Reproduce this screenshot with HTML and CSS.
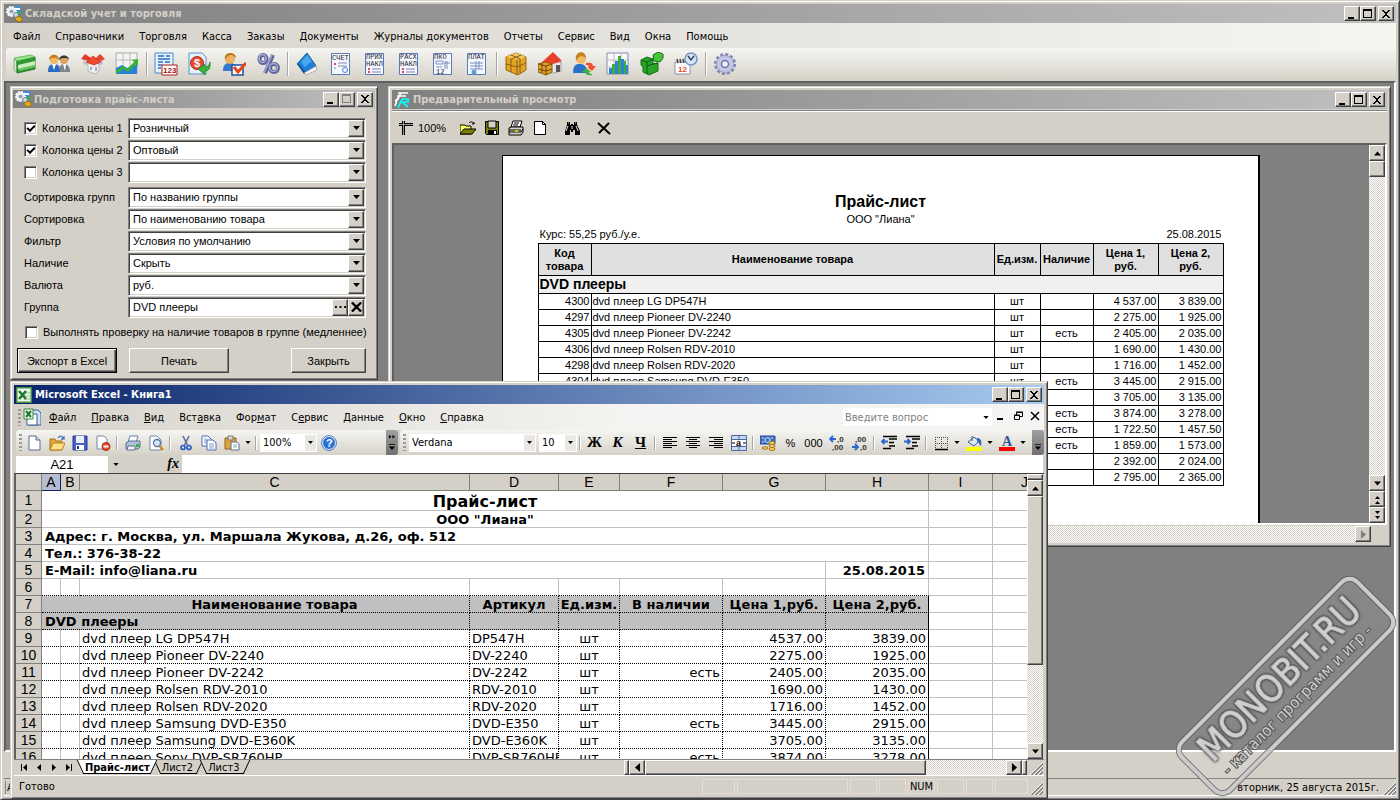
FILE: index.html
```html
<!DOCTYPE html>
<html lang="ru">

<head>
    <meta charset="UTF-8">
    <meta name="viewport" content="width=device-width, initial-scale=1.0">
    <title>Складской учет и торговля</title>
    <link rel="stylesheet" href="styles.css">
</head>

<body>
    <!-- Shared glyphs -->
    <svg class="sprite" aria-hidden="true">
        <symbol id="i-min" viewBox="0 0 12 10"><path d="M2 8h6v2H2z" /></symbol>
        <symbol id="i-max" viewBox="0 0 12 10"><path d="M1 0h9v9H1zM2 2v6h7V2z" fill-rule="evenodd" /></symbol>
        <symbol id="i-close" viewBox="0 0 12 10"><path d="M2 1h2v1h1v1h2V2h1V1h2v1H9v1H8v1H7v2h1v1h1v1h1v1H8V8H7V7H5v1H4v1H2V8h1V7h1V6h1V4H4V3H3V2H2z" /></symbol>
        <symbol id="i-down" viewBox="0 0 7 4"><path d="M0 0h7L3.500 4z" /></symbol>
        <symbol id="i-up" viewBox="0 0 7 4"><path d="M0 4h7L3.500 0z" /></symbol>
        <symbol id="i-left" viewBox="0 0 4 7"><path d="M4 0v7L0 3.500z" /></symbol>
        <symbol id="i-right" viewBox="0 0 4 7"><path d="M0 0v7l4-3.500z" /></symbol>
        <symbol id="i-app" viewBox="0 0 16 16">
            <path d="M9 0h6v9H9z" fill="#3c8fe0" /><path d="M10 2h4v2h-4z" fill="#fff" /><path d="M12 5h3v4h-3z" fill="#2fae4e" />
            <circle cx="5.500" cy="5.500" r="4.500" fill="#e8ecf2" stroke="#fff" stroke-width="2" stroke-dasharray="2 1" />
            <circle cx="5.500" cy="5.500" r="1.800" fill="#8e99ab" />
            <circle cx="10" cy="9" r="2.500" fill="#cdd5e2" stroke="#76839a" />
            <path d="M9 12l4-2 3 2v3l-3 1-4-2z" fill="#e5a91b" stroke="#7d5505" stroke-width=".7" />
        </symbol>
        <symbol id="i-grip" viewBox="0 0 13 13"><path d="M1 13L13 1M5 13l8-8M9 13l4-4" stroke="#808080" stroke-width="2" /><path d="M0 13L13 0M4 13l9-9M8 13l5-5" stroke="#fff" /></symbol>
        <symbol id="i-sheet" viewBox="0 0 24 24"><path d="M2.500 1.500h18v21h-18z" fill="#f5f8ff" stroke="#5b7ab5" /></symbol>
    </svg>

    <div class="app frame">
        <header class="titlebar">
            <svg class="title-icon"><use href="#i-app" /></svg>
            <h1>Складской учет и торговля</h1>
            <button class="win-btn" aria-label="Свернуть"><svg><use href="#i-min" /></svg></button>
            <button class="win-btn" aria-label="Развернуть"><svg><use href="#i-max" /></svg></button>
            <button class="win-btn win-close" aria-label="Закрыть"><svg><use href="#i-close" /></svg></button>
        </header>

        <nav class="menubar">
            <button>Файл</button>
            <button>Справочники</button>
            <button>Торговля</button>
            <button>Касса</button>
            <button>Заказы</button>
            <button>Документы</button>
            <button>Журналы документов</button>
            <button>Отчеты</button>
            <button>Сервис</button>
            <button>Вид</button>
            <button>Окна</button>
            <button>Помощь</button>
        </nav>

        <div class="toolbar">
            <button aria-label="Товары"><svg viewBox="0 0 24 24"><path d="M1 7l3 2v11l-3-2z" fill="#d5e8d0" stroke="#5f9a5c" stroke-width=".7" /><path d="M4 9l18-4v12L4 21z" fill="#2f9a35" stroke="#247a28" /><path d="M1 6l17-3 4 2L4 9z" fill="#9be68a" stroke="#4ca945" stroke-width=".7" /><path d="M5 13l17-4v4L5 17z" fill="#c9efc0" /><path d="M6 17l16-4v2L6 19z" fill="#6fca62" /></svg></button>
            <button aria-label="Клиенты"><svg viewBox="0 0 24 24"><path d="M12 20c0-6 2-8 5-8s6 2 6 8z" fill="#7d8490" /><path d="M16 12h3l-1 7z" fill="#fff" /><circle cx="17" cy="8" r="4" fill="#dca25e" /><path d="M12 8c0-6 10-6 10 0l-2-2h-5z" fill="#333" /><path d="M1 20c0-6 2-8 6-8s6 2 6 8z" fill="#2b6cc0" /><path d="M5 12h4l-2 6z" fill="#fff" /><circle cx="7" cy="8" r="4" fill="#f3b867" /><path d="M2 8c0-7 10-7 10 0L9 6H5z" fill="#c48222" /></svg></button>
            <button aria-label="Склады"><svg viewBox="0 0 24 24"><path d="M3 7h5v5H3zM16 7h5v5h-5z" fill="#d5d7de" stroke="#999" stroke-width=".6" /><path d="M0 7l4-5 6 4-1 3z" fill="#e23a25" /><path d="M14 7l5-5 5 5-4 2z" fill="#e8432c" /><path d="M7 11h11v8l-4 3-7-3z" fill="#edeef2" stroke="#9a9ca5" stroke-width=".6" /><path d="M5 10l7-6 8 6-7 3z" fill="#ef4a31" stroke="#b3200e" stroke-width=".6" /><path d="M9 15h2v3H9zM14 15h2v4h-2z" fill="#a7acb7" /></svg></button>
            <button aria-label="Графики"><svg viewBox="0 0 24 24"><path d="M1 1h21v20H1z" fill="#f4f4f4" stroke="#aaa" /><path d="M8 1v20M15 1v20M1 8h21" stroke="#bbb" /><path d="M1 22v-6l6-3 5 3 10-4v10z" fill="#2980d9" /><path d="M1 19l7-5 4 3 7-7-2-2 6-1v7l-2-2-8 8-4-3-8 5z" fill="#35b52c" /></svg></button>
            <span class="sep"></span>
            <button aria-label="Чек"><svg viewBox="0 0 24 24"><path d="M1 1h18v20H1z" fill="#e4f0fd" stroke="#4688c9" /><path d="M4 4h6M12 4h4M4 7h12M4 10h5M11 10h5M4 13h4M4 16h3" stroke="#2a6fb7" stroke-width="1.500" /><path d="M8 13h15v10H8z" fill="#fff" stroke="#b21c1c" /><text x="9" y="21" class="g-123">123</text></svg></button>
            <button aria-label="Оплата"><svg viewBox="0 0 24 24"><path d="M1 1h13l4 4v17H1z" fill="#e7f1fd" stroke="#5b92cf" /><circle cx="9" cy="11" r="6.500" fill="#e8492c" stroke="#b52a12" /><text x="6" y="15" class="g-dollar">$</text><path d="M22 10c1 7-2 9-5 9v4l-7-6 7-5v3c2 0 4-1 5-5z" fill="#3db03a" stroke="#1e7c1d" stroke-width=".7" /></svg></button>
            <button aria-label="Менеджеры"><svg viewBox="0 0 24 24"><path d="M1 19c0-7 3-8 7-8s7 2 7 8z" fill="#3b78cf" /><circle cx="8" cy="7" r="5" fill="#eeb163" /><path d="M3 8C1-1 14-1 14 6l-4-3c-3 0-5 1-7 5z" fill="#b97a1e" /><path d="M10 13h11v10H10z" fill="#fff" stroke="#2250a0" stroke-width="1.500" /><path d="M12 15l4 5 8-9" fill="none" stroke="#e84415" stroke-width="3" /></svg></button>
            <button aria-label="Скидки"><svg viewBox="0 0 24 24"><g fill="none" stroke="#5e6399" stroke-width="4"><ellipse cx="7" cy="7" rx="3.500" ry="4" /><ellipse cx="18" cy="16" rx="4" ry="4" /><path d="M17 3L9 21" /></g><g fill="none" stroke="#a9adda" stroke-width="1.500"><ellipse cx="6.500" cy="6.500" rx="3.500" ry="4" /><ellipse cx="17.500" cy="15.500" rx="4" ry="4" /><path d="M16 3L8 21" /></g></svg></button>
            <span class="sep"></span>
            <button aria-label="Справочник"><svg viewBox="0 0 24 24"><path d="M2 12L12 1l9 13-10 7z" fill="#1c80d8" stroke="#0f5a9f" /><path d="M2 12l7 10 2-1-6-8z" fill="#0d5396" /><path d="M9 21l12-7 1 4-11 5z" fill="#f5f5f5" stroke="#888" stroke-width=".6" /><path d="M6 10l6-7 5 6-7 6z" fill="#4aa7f0" /></svg></button>
            <button aria-label="Счет"><svg viewBox="0 0 24 24"><use href="#i-sheet" /><text x="3" y="8" class="g-doc">СЧЕТ</text><path d="M6 11v2" stroke="#c13" stroke-width="1.500" /><path d="M6 15v2M9 14h9M9 11h9" stroke="#7c86b4" /><circle cx="16" cy="18" r="2.500" fill="none" stroke="#3f7fd0" /></svg></button>
            <button aria-label="Приходная накладная"><svg viewBox="0 0 24 24"><use href="#i-sheet" /><text x="3" y="7" class="g-doc">ПРИХ</text><text x="3" y="14" class="g-doc">НАКЛ</text><path d="M6 16v2M6 19v2" stroke="#c13" stroke-width="1.500" /><path d="M9 17h9M9 20h9" stroke="#7c86b4" /></svg></button>
            <button aria-label="Расходная накладная"><svg viewBox="0 0 24 24"><use href="#i-sheet" /><text x="3" y="7" class="g-doc">РАСХ</text><text x="3" y="14" class="g-doc">НАКЛ</text><path d="M6 16v2M6 19v2" stroke="#c13" stroke-width="1.500" /><path d="M9 17h9M9 20h9" stroke="#7c86b4" /></svg></button>
            <button aria-label="Кассовый ордер"><svg viewBox="0 0 24 24"><use href="#i-sheet" /><text x="3" y="7" class="g-doc">ПКО</text><path d="M5 9h7v3H5zM14 9v8M14 11h5M16 9v8M5 15h6" fill="none" stroke="#7c8fc0" /><text x="5" y="22" class="g-doc">12</text></svg></button>
            <button aria-label="Платежное поручение"><svg viewBox="0 0 24 24"><use href="#i-sheet" /><text x="3" y="7" class="g-doc">ПЛАТ</text><path d="M5 11h13M11 9v8M5 14h13M5 17h13M14 9v8" stroke="#7c8fc0" /><circle cx="9" cy="20" r="2.500" fill="#5aa0e0" /></svg></button>
            <span class="sep"></span>
            <button aria-label="Товар"><svg viewBox="0 0 24 24"><path d="M2 5l10-4 10 4v13l-8 5-12-5z" fill="#e2a32a" stroke="#99660d" /><path d="M2 5l11 3 9-3-10-4z" fill="#f3c55c" /><path d="M13 8v15M2 12l11 3 9-4M7 3l9 4v14M7 6v14M8 7l9-4" fill="none" stroke="#8a5d0c" /></svg></button>
            <button aria-label="Склад"><svg viewBox="0 0 24 24"><path d="M8 10h15v9l-8 2H8z" fill="#e4e6ec" stroke="#888" stroke-width=".7" /><path d="M4 10L15 0l9 9-9 3z" fill="#e8412b" /><path d="M18 13h4v7h-4z" fill="#555" /><path d="M0 12l7-2 7 2v8l-6 3-8-3z" fill="#e2a32a" stroke="#8b5c09" /><path d="M0 12l8 2 6-2M8 14v9M0 17l8 2 6-2M4 11v10" fill="none" stroke="#6d4706" /></svg></button>
            <button aria-label="Возврат"><svg viewBox="0 0 24 24"><path d="M1 21c0-8 3-9 7-9s7 2 7 9z" fill="#2b71c8" /><circle cx="9" cy="7" r="5" fill="#f3b867" /><path d="M4 9C2-2 14-2 14 6l-4-2c-2 0-4 1-6 5z" fill="#c48222" /><path d="M14 11c4-1 7 0 7 3h3l-4 5-5-4h2c0-1-1-2-3-2z" fill="#f0502e" /><path d="M20 23c-4 1-7-1-7-3h-3l4-4 5 4h-2c0 1 1 2 3 2z" fill="#3db03a" /></svg></button>
            <button aria-label="Отчет"><svg viewBox="0 0 24 24"><path d="M1 1h21v21H1z" fill="#fafafa" stroke="#8888b0" /><path d="M1 8h21M1 15h21M8 1v21M15 1v21" stroke="#bbb" /><path d="M3 16h3v6H3zM9 9h3v13H9zM15 7h3v15h-3zM20 13h2v9h-2z" fill="#2f7fe0" /><path d="M6 12h3v10H6zM12 4h3v18h-3zM18 9h2v13h-2z" fill="#3cae33" /></svg></button>
            <button aria-label="Модули"><svg viewBox="0 0 24 24"><path d="M1 8l6-3 6 2v5l5-1v8l-9 4-6-3v-5l-2-2z" fill="#27a327" stroke="#137013" /><path d="M1 8l6 2 6-3M7 10v12M7 14l6-2 5-1" fill="none" stroke="#0c5c0c" /><path d="M13 3l5-3 5 2v4l-3 4-6-1z" fill="#45c43c" stroke="#137013" /></svg></button>
            <button aria-label="Планировщик"><svg viewBox="0 0 24 24"><path d="M1 10h15v12H1z" fill="#fff" stroke="#8b93ab" /><path d="M3 7l1 4M6 7l1 4M9 7l1 4" stroke="#444" stroke-width="1.500" /><text x="4" y="20" class="g-cal">12</text><circle cx="17" cy="7" r="6" fill="#cfe6fa" stroke="#7a93bb" stroke-width="1.500" /><path d="M14 4l3 4 3-4" fill="none" stroke="#335" stroke-width="1.300" /></svg></button>
            <span class="sep"></span>
            <button aria-label="Настройки"><svg viewBox="0 0 24 24"><circle cx="12" cy="12" r="9.500" fill="none" stroke="#8186ad" stroke-width="3" stroke-dasharray="3 1.970" /><circle cx="12" cy="12" r="8.500" fill="#c5c8e4" stroke="#9a9ec6" /><circle cx="12" cy="12" r="3.500" fill="#eeeef8" stroke="#7075a5" stroke-width="1.500" /></svg></button>
        </div>

        <main class="mdi">
            <!-- Price list dialog -->
            <section class="dialog frame">
                <div class="titlebar">
                    <svg class="title-icon"><use href="#i-app" /></svg>
                    <h2>Подготовка прайс-листа</h2>
                    <button class="win-btn" aria-label="Свернуть"><svg><use href="#i-min" /></svg></button>
                    <button class="win-btn win-off" aria-label="Развернуть" disabled><svg><use href="#i-max" /></svg></button>
                    <button class="win-btn win-close" aria-label="Закрыть"><svg><use href="#i-close" /></svg></button>
                </div>
                <form class="price-form">
                    <div class="field">
                        <label class="check"><input type="checkbox" checked>Колонка цены 1</label>
                        <div class="combo"><select aria-label="Цена 1"><option>Розничный</option></select><span class="drop"><svg><use href="#i-down" /></svg></span></div>
                    </div>
                    <div class="field">
                        <label class="check"><input type="checkbox" checked>Колонка цены 2</label>
                        <div class="combo"><select aria-label="Цена 2"><option>Оптовый</option></select><span class="drop"><svg><use href="#i-down" /></svg></span></div>
                    </div>
                    <div class="field field-last">
                        <label class="check"><input type="checkbox">Колонка цены 3</label>
                        <div class="combo"><select aria-label="Цена 3"><option></option></select><span class="drop"><svg><use href="#i-down" /></svg></span></div>
                    </div>
                    <div class="field">
                        <label for="sortGroups">Сортировка групп</label>
                        <div class="combo"><select id="sortGroups"><option>По названию группы</option></select><span class="drop"><svg><use href="#i-down" /></svg></span></div>
                    </div>
                    <div class="field">
                        <label for="sortItems">Сортировка</label>
                        <div class="combo"><select id="sortItems"><option>По наименованию товара</option></select><span class="drop"><svg><use href="#i-down" /></svg></span></div>
                    </div>
                    <div class="field">
                        <label for="filter">Фильтр</label>
                        <div class="combo"><select id="filter"><option>Условия по умолчанию</option></select><span class="drop"><svg><use href="#i-down" /></svg></span></div>
                    </div>
                    <div class="field">
                        <label for="stock">Наличие</label>
                        <div class="combo"><select id="stock"><option>Скрыть</option></select><span class="drop"><svg><use href="#i-down" /></svg></span></div>
                    </div>
                    <div class="field">
                        <label for="currency">Валюта</label>
                        <div class="combo"><select id="currency"><option>руб.</option></select><span class="drop"><svg><use href="#i-down" /></svg></span></div>
                    </div>
                    <div class="field">
                        <label for="group">Группа</label>
                        <div class="combo">
                            <input type="text" id="group" value="DVD плееры">
                            <button type="button" class="drop" aria-label="Выбрать"><svg viewBox="0 0 12 10"><path d="M0 4h2v2H0zM5 4h2v2H5zM10 4h2v2h-2z" /></svg></button>
                            <button type="button" class="drop" aria-label="Очистить"><svg viewBox="0 0 12 10"><path d="M1 0l10 10M11 0L1 10" stroke="#000" stroke-width="2.500" /></svg></button>
                        </div>
                    </div>
                    <label class="check check-wide"><input type="checkbox">Выполнять проверку на наличие товаров в группе (медленнее)</label>
                    <div class="form-buttons">
                        <button type="button" class="btn btn-default">Экспорт в Excel</button>
                        <button type="button" class="btn">Печать</button>
                        <button type="button" class="btn btn-small">Закрыть</button>
                    </div>
                </form>
            </section>

            <!-- Print preview -->
            <section class="preview frame">
                <div class="titlebar">
                    <svg class="title-icon" viewBox="0 0 16 16"><path d="M4 1h10M3 4h9M7 1L3 8M1 9l4-3M3 8l-2 6" stroke="#fff" stroke-width="1.700" fill="none" /><path d="M8 7h6v3H8l6 5M8 7l-4 9M8 10h5" stroke="#0ff" stroke-width="1.700" fill="none" /></svg>
                    <h2>Предварительный просмотр</h2>
                    <button class="win-btn" aria-label="Свернуть"><svg><use href="#i-min" /></svg></button>
                    <button class="win-btn" aria-label="Развернуть"><svg><use href="#i-max" /></svg></button>
                    <button class="win-btn win-close" aria-label="Закрыть"><svg><use href="#i-close" /></svg></button>
                </div>
                <div class="preview-tools">
                    <button class="tool-zoom"><svg viewBox="0 0 16 16"><path d="M1 4.500h14M5.500 1v14" stroke="#000" stroke-width="3" /><path d="M1 4.500h14M5.500 1v14" stroke="#999" /></svg>100%</button>
                    <button aria-label="Открыть"><svg viewBox="0 0 16 16"><path d="M0 5h5l1 1h5v8H0z" fill="#ff6" stroke="#000" /><path d="M0 14l4-5h12l-4 5z" fill="#808000" stroke="#000" /><path d="M9 3c2-2 4-1 5 1m0-2v2h-2" fill="none" stroke="#000" /></svg></button>
                    <button aria-label="Сохранить"><svg viewBox="0 0 16 16"><path d="M1.500 1.500h13v13h-12l-1-1z" fill="#808000" stroke="#000" /><path d="M4 1h8v7H4z" fill="#d4d0c8" stroke="#000" /><path d="M4 10h9v5H4z" /><path d="M10 11h2v3h-2z" fill="#fff" /></svg></button>
                    <button aria-label="Печать"><svg viewBox="0 0 16 16"><path d="M5 1h9l-2 6H3z" fill="#fff" stroke="#000" /><path d="M6 3h5M5 5h5" stroke="#000" /><path d="M1 8l2-1h12v5l-2 3H1z" fill="#d4d0c8" stroke="#000" /><path d="M1 10h12M1 12h12l2-3" stroke="#000" fill="none" /><path d="M7 11h3" stroke="#cc0" stroke-width="2" /></svg></button>
                    <button aria-label="Страница"><svg viewBox="0 0 16 16"><path d="M2.500 1.500h8l3 3v10h-11z" fill="#fff" stroke="#000" /><path d="M10.500 1v3.500H14" fill="none" stroke="#000" /></svg></button>
                    <button class="tool-find" aria-label="Найти"><svg viewBox="0 0 16 16"><path d="M3 2h3v3h1V4h2v1h1V2h3v3l3 6v4h-5v-5H9v2H7v-2H6v5H1v-4l2-6z" /><path d="M4 6l-2 5M12 6l2 5M4 3h1M11 3h1M8 6v3" stroke="#fff" stroke-width=".9" /></svg></button>
                    <button class="tool-find" aria-label="Закрыть просмотр"><svg viewBox="0 0 16 16"><path d="M2 3l12 11M13 3L3 13" stroke="#000" stroke-width="2" /></svg></button>
                </div>
                <div class="preview-view">
                    <div class="canvas">
                        <article class="paper">
                            <h3>Прайс-лист</h3>
                            <p class="org">ООО "Лиана"</p>
                            <p class="rate"><span>Курс: 55,25 руб./у.е.</span><span>25.08.2015</span></p>
                            <table class="price-table">
                                <colgroup><col class="w-code"><col><col class="w-unit"><col class="w-code"><col class="w-price"><col class="w-price"></colgroup>
                                <thead>
                                    <tr><th>Код товара</th><th>Наименование товара</th><th>Ед.изм.</th><th>Наличие</th><th>Цена 1,<br>руб.</th><th>Цена 2,<br>руб.</th></tr>
                                </thead>
                                <tbody>
                                    <tr class="group"><td colspan="6">DVD плееры</td></tr>
                                    <tr><td>4300</td><td>dvd плеер LG DP547H</td><td>шт</td><td></td><td>4 537.00</td><td>3 839.00</td></tr>
                                    <tr><td>4297</td><td>dvd плеер Pioneer DV-2240</td><td>шт</td><td></td><td>2 275.00</td><td>1 925.00</td></tr>
                                    <tr><td>4305</td><td>dvd плеер Pioneer DV-2242</td><td>шт</td><td>есть</td><td>2 405.00</td><td>2 035.00</td></tr>
                                    <tr><td>4306</td><td>dvd плеер Rolsen RDV-2010</td><td>шт</td><td></td><td>1 690.00</td><td>1 430.00</td></tr>
                                    <tr><td>4298</td><td>dvd плеер Rolsen RDV-2020</td><td>шт</td><td></td><td>1 716.00</td><td>1 452.00</td></tr>
                                    <tr><td>4304</td><td>dvd плеер Samsung DVD-E350</td><td>шт</td><td>есть</td><td>3 445.00</td><td>2 915.00</td></tr>
                                    <tr><td></td><td></td><td></td><td></td><td>3 705.00</td><td>3 135.00</td></tr>
                                    <tr><td></td><td></td><td></td><td>есть</td><td>3 874.00</td><td>3 278.00</td></tr>
                                    <tr><td></td><td></td><td></td><td>есть</td><td>1 722.50</td><td>1 457.50</td></tr>
                                    <tr><td></td><td></td><td></td><td>есть</td><td>1 859.00</td><td>1 573.00</td></tr>
                                    <tr><td></td><td></td><td></td><td></td><td>2 392.00</td><td>2 024.00</td></tr>
                                    <tr><td></td><td></td><td></td><td></td><td>2 795.00</td><td>2 365.00</td></tr>
                                </tbody>
                            </table>
                        </article>
                    </div>
                    <div class="vscroll">
                        <button class="sb" aria-label="Вверх"><svg><use href="#i-up" /></svg></button>
                        <span class="sb"></span>
                        <span class="track"></span>
                        <button class="sb" aria-label="Вниз"><svg><use href="#i-down" /></svg></button>
                        <button class="sb" aria-label="Предыдущая страница"><svg viewBox="0 0 7 9"><path d="M1 4h5L3.500 1zM1 9h5L3.500 6z" /></svg></button>
                        <button class="sb" aria-label="Следующая страница"><svg viewBox="0 0 7 9"><path d="M1 0h5L3.500 3zM1 5h5L3.500 8z" /></svg></button>
                    </div>
                </div>
                <div class="hscroll">
                    <span class="track"></span>
                    <button class="sb sb-off" aria-label="Вправо" disabled><svg><use href="#i-right" /></svg></button>
                </div>
            </section>
        </main>

        <footer class="statusbar">
            <span class="status-user">А</span>
            <span class="status-date">вторник, 25 августа 2015г.</span>
            <svg class="grip"><use href="#i-grip" /></svg>
        </footer>
    </div>

    <!-- Excel window -->
    <section class="excel frame">
        <header class="titlebar titlebar-active">
            <svg class="title-icon" viewBox="0 0 16 16"><path d="M0 0h16v16H0z" fill="#3f8f3f" /><path d="M1.500 1.500h13v13h-13z" fill="#f0f7ee" /><path d="M8 6h6M8 9h6M8 12h6" stroke="#8b8" /><path d="M3 4l7 8M10 4l-7 8" stroke="#1c7a2a" stroke-width="2.600" /></svg>
            <h1>Microsoft Excel - Книга1</h1>
            <button class="win-btn" aria-label="Свернуть"><svg><use href="#i-min" /></svg></button>
            <button class="win-btn" aria-label="Развернуть"><svg><use href="#i-max" /></svg></button>
            <button class="win-btn win-close" aria-label="Закрыть"><svg><use href="#i-close" /></svg></button>
        </header>

        <nav class="xl-menu">
            <span class="dots"></span>
            <svg class="xl-book" viewBox="0 0 18 18"><path d="M8 2h7l3 3v12H6z" fill="#cfe0f5" stroke="#3a5d98" /><path d="M4 6h10v11H4z" fill="#fff" stroke="#3a5d98" /><path d="M1 1h9v10H1z" fill="#eef7ec" stroke="#2f8a38" /><path d="M3 3l5 6M8 3L3 9" stroke="#1c7a2a" stroke-width="2" /></svg>
            <button><u>Ф</u>айл</button>
            <button><u>П</u>равка</button>
            <button><u>В</u>ид</button>
            <button>Вст<u>а</u>вка</button>
            <button>Фор<u>м</u>ат</button>
            <button>С<u>е</u>рвис</button>
            <button><u>Д</u>анные</button>
            <button><u>О</u>кно</button>
            <button><u>С</u>правка</button>
            <div class="ask"><input type="text" placeholder="Введите вопрос" aria-label="Введите вопрос"><svg><use href="#i-down" /></svg></div>
            <button class="doc-btn" aria-label="Свернуть книгу"><svg viewBox="0 0 12 10"><path d="M2 7h6v2H2z" /></svg></button>
            <button class="doc-btn" aria-label="Восстановить книгу"><svg viewBox="0 0 12 10"><path d="M4.500 5V1.500h6v4H8M4 1h7" fill="none" stroke="#000" /><path d="M2.500 4.500h5v4h-5zM2 4h6" fill="none" stroke="#000" /></svg></button>
            <button class="doc-btn" aria-label="Закрыть книгу"><svg viewBox="0 0 12 10"><path d="M2 1l8 8M10 1L2 9" stroke="#000" stroke-width="1.500" /></svg></button>
        </nav>

        <div class="xl-tools">
            <div class="xl-bar">
                <span class="dots"></span>
                <button aria-label="Создать"><svg viewBox="0 0 16 16"><path d="M3 1h7l4 4v10H3z" fill="#fff" stroke="#5a6f95" /><path d="M10 1v4h4" fill="#cfdcf0" stroke="#5a6f95" /></svg></button>
                <button aria-label="Открыть"><svg viewBox="0 0 16 16"><path d="M1 4h5l1 2h6v9H1z" fill="#e8a93a" stroke="#a66f13" /><path d="M1 15l3-7h12l-3 7z" fill="#ffdf8a" stroke="#b5811d" /><path d="M9 3c2-3 4-2 5 0m1-2v3h-3" fill="none" stroke="#4d74b0" stroke-width="1.300" /></svg></button>
                <button aria-label="Сохранить"><svg viewBox="0 0 16 16"><path d="M1 1h14v14H1z" fill="#4a5ec4" stroke="#2a3a90" /><path d="M4 1h8v7H4z" fill="#e9eefb" /><path d="M4 10h8v5H4z" fill="#fff" /><path d="M5 11h2v3H5z" fill="#2a3a90" /></svg></button>
                <button aria-label="Разрешения"><svg viewBox="0 0 16 16"><path d="M2 1h7l3 3v10H2z" fill="#fff" stroke="#7486ab" /><circle cx="11" cy="11.500" r="4" fill="#e3502f" stroke="#a8290f" /><path d="M8.500 11.500h5" stroke="#fff" stroke-width="2" /></svg></button>
                <span class="xsep"></span>
                <button aria-label="Печать"><svg viewBox="0 0 16 16"><path d="M5 1h8l-2 6H3z" fill="#fff" stroke="#6780a8" /><path d="M1 8l3-2h11v6l-2 2H1z" fill="#b3c1d8" stroke="#5c6f93" /><path d="M3 11h7v4H2z" fill="#eef2f8" stroke="#5c6f93" /><path d="M11 9h3v3h-3z" fill="#2fbb2f" /></svg></button>
                <button aria-label="Просмотр"><svg viewBox="0 0 16 16"><path d="M2 1h7l4 4v10H2z" fill="#fff" stroke="#7486ab" /><circle cx="9" cy="8" r="3.500" fill="#d5e8fb" stroke="#56709d" stroke-width="1.300" /><path d="M11.500 11l3.500 4" stroke="#d28a25" stroke-width="2.500" /></svg></button>
                <span class="xsep"></span>
                <button aria-label="Вырезать"><svg viewBox="0 0 16 16"><path d="M5 1l5 10M11 1L6 11" stroke="#5a6f9f" stroke-width="1.600" /><circle cx="5" cy="12.500" r="2" fill="none" stroke="#2d5fc4" stroke-width="1.700" /><circle cx="11" cy="12.500" r="2" fill="none" stroke="#2d5fc4" stroke-width="1.700" /></svg></button>
                <button aria-label="Копировать"><svg viewBox="0 0 16 16"><path d="M1 1h6l3 3v7H1z" fill="#fff" stroke="#4c6cb3" /><path d="M3 4h3M3 6h5M3 8h5" stroke="#7d9bd4" /><path d="M6 5h6l3 3v7H6z" fill="#fff" stroke="#4c6cb3" /><path d="M8 9h5M8 11h5M8 13h5" stroke="#7d9bd4" /></svg></button>
                <button aria-label="Вставить"><svg viewBox="0 0 16 16"><path d="M1 3h11v11H1z" fill="#e0a43c" stroke="#96641a" /><path d="M4 1h5v4H4z" fill="#d9d9d9" stroke="#777" /><path d="M7 7h6l2 2v6H7z" fill="#fff" stroke="#5a6f95" /><path d="M9 10h4M9 12h4" stroke="#8aa" /></svg></button>
                <svg class="arr"><use href="#i-down" /></svg>
                <span class="xsep"></span>
                <div class="xl-combo w-zoom"><select aria-label="Масштаб"><option>100%</option></select><span><svg><use href="#i-down" /></svg></span></div>
                <button aria-label="Справка"><svg viewBox="0 0 16 16"><circle cx="8" cy="8" r="6.500" fill="#2a6fd6" stroke="#fff" /><circle cx="8" cy="8" r="7.400" fill="none" stroke="#4779bd" /><text x="5" y="12" class="g-help">?</text></svg></button>
                <span class="cap"><svg viewBox="0 0 9 20"><path d="M1 1l3 2-3 2zM5 1l3 2-3 2zM1 11h7v1H1zM1 14h7L4.500 18z" /></svg></span>
            </div>
            <div class="xl-bar xl-bar-wide">
                <span class="dots"></span>
                <div class="xl-combo w-font"><select aria-label="Шрифт"><option>Verdana</option></select><span><svg><use href="#i-down" /></svg></span></div>
                <div class="xl-combo w-size"><select aria-label="Размер"><option>10</option></select><span><svg><use href="#i-down" /></svg></span></div>
                <span class="xsep"></span>
                <button class="fmt"><b>Ж</b></button>
                <button class="fmt"><i>К</i></button>
                <button class="fmt"><u>Ч</u></button>
                <span class="xsep"></span>
                <button aria-label="По левому краю"><svg viewBox="0 0 16 16"><path d="M1 2.500h14M1 4.500h9M1 6.500h14M1 8.500h9M1 10.500h14M1 12.500h9" stroke="#000" /></svg></button>
                <button aria-label="По центру"><svg viewBox="0 0 16 16"><path d="M1 2.500h14M4 4.500h8M1 6.500h14M4 8.500h8M1 10.500h14M4 12.500h8" stroke="#000" /></svg></button>
                <button aria-label="По правому краю"><svg viewBox="0 0 16 16"><path d="M1 2.500h14M6 4.500h9M1 6.500h14M6 8.500h9M1 10.500h14M6 12.500h9" stroke="#000" /></svg></button>
                <button aria-label="Объединить"><svg viewBox="0 0 16 16"><path d="M.500.500h15v15H.500z" fill="#c9d8f0" stroke="#4c6a9f" /><path d="M0 4.500h16M0 11.500h16M8 0v4M8 12v4" stroke="#4c6a9f" /><path d="M1 5h14v6H1z" fill="#fff" /><path d="M1 8h3M12 8h3" stroke="#000" /><text x="5" y="11" class="g-a">a</text></svg></button>
                <span class="xsep"></span>
                <button aria-label="Денежный формат"><svg viewBox="0 0 16 16"><path d="M0 1h15v8H0z" fill="#3b6fc2" stroke="#24509b" /><circle cx="7.500" cy="5" r="2.500" fill="none" stroke="#dbe7fa" /><path d="M2 3h2M11 3h2M2 7h2M11 7h2" stroke="#dbe7fa" /><ellipse cx="12" cy="8" rx="3" ry="1.500" fill="#ffd45e" stroke="#a0741a" /><ellipse cx="12" cy="11" rx="3" ry="1.500" fill="#ffd45e" stroke="#a0741a" /><ellipse cx="12" cy="14" rx="3" ry="1.500" fill="#ffd45e" stroke="#a0741a" /><ellipse cx="5" cy="13" rx="3" ry="1.300" fill="#ffd45e" stroke="#a0741a" /></svg></button>
                <button class="num">%</button>
                <button class="num">000</button>
                <button aria-label="Увеличить разрядность"><svg viewBox="0 0 16 16"><path d="M7 4H1M4 1L1 4l3 3" fill="none" stroke="#2b66d0" stroke-width="1.800" /><text x="8" y="7" class="g-dec">,0</text><text x="3" y="15" class="g-dec">,00</text></svg></button>
                <button aria-label="Уменьшить разрядность"><svg viewBox="0 0 16 16"><path d="M0 12h6M3 9l3 3-3 3" fill="none" stroke="#2b66d0" stroke-width="1.800" /><text x="3" y="7" class="g-dec">,00</text><text x="8" y="15" class="g-dec">,0</text></svg></button>
                <span class="xsep"></span>
                <button aria-label="Уменьшить отступ"><svg viewBox="0 0 16 16"><path d="M2 1.500h14M8 4h8M8 7.500h5M8 11h6M2 13.500h8" stroke="#000" stroke-width="1.700" /><path d="M7 6.500H1M3.500 4L1 6.500 3.500 9" fill="none" stroke="#2b66d0" stroke-width="1.800" /></svg></button>
                <button aria-label="Увеличить отступ"><svg viewBox="0 0 16 16"><path d="M2 1.500h14M8 4h8M8 7.500h5M8 11h6M2 13.500h8" stroke="#000" stroke-width="1.700" /><path d="M0 6.500h6M3.500 4L6 6.500 3.500 9" fill="none" stroke="#2b66d0" stroke-width="1.800" /></svg></button>
                <span class="xsep"></span>
                <button aria-label="Границы"><svg viewBox="0 0 16 16"><path d="M2.500 2v12M8.500 2v12M14.500 2v12M2 2.500h13M2 8.500h13" stroke="#444" stroke-dasharray="1 1" /><path d="M2 14.500h13" stroke="#000" stroke-width="1.500" /></svg></button>
                <svg class="arr"><use href="#i-down" /></svg>
                <button aria-label="Цвет заливки"><svg viewBox="0 0 16 16"><path d="M2 7l6-5 5 4-5 5z" fill="#dfe8f5" stroke="#3d5b91" /><path d="M6 1v5" stroke="#3d5b91" /><path d="M11 3c4 0 5 3 4 8-2-1-2-4-4-5z" fill="#2d66c0" /><path d="M0 12h16v4H0z" fill="#ff0" /></svg></button>
                <svg class="arr"><use href="#i-down" /></svg>
                <button aria-label="Цвет текста"><svg viewBox="0 0 16 16"><text x="3" y="11" class="g-color">A</text><path d="M0 12h16v4H0z" fill="#f00" /></svg></button>
                <svg class="arr"><use href="#i-down" /></svg>
                <span class="cap"><svg viewBox="0 0 9 20"><path d="M1 11h7v1H1zM1 14h7L4.500 18z" /></svg></span>
            </div>
        </div>

        <div class="formula">
            <input type="text" class="namebox" value="A21" aria-label="Имя">
            <svg class="arr"><use href="#i-down" /></svg>
            <span class="fx">fx</span>
            <input type="text" class="formula-input" aria-label="Строка формул">
        </div>

        <div class="sheet">
            <div class="grid-clip">
                <table class="grid">
                    <colgroup><col class="c-num"><col class="c-a"><col class="c-a"><col class="c-c"><col class="c-d"><col class="c-e"><col class="c-f"><col class="c-f"><col class="c-f"><col class="c-i"><col class="c-i"></colgroup>
                    <thead>
                        <tr><th></th><th class="picked">A</th><th>B</th><th>C</th><th>D</th><th>E</th><th>F</th><th>G</th><th>H</th><th>I</th><th>J</th></tr>
                    </thead>
                    <tbody>
                        <tr class="tall"><th>1</th><td colspan="8" class="sheet-title">Прайс-лист</td><td></td><td></td></tr>
                        <tr><th>2</th><td colspan="8" class="mid bold">ООО "Лиана"</td><td></td><td></td></tr>
                        <tr><th>3</th><td colspan="8" class="bold">Адрес: г. Москва, ул. Маршала Жукова, д.26, оф. 512</td><td></td><td></td></tr>
                        <tr><th>4</th><td colspan="8" class="bold">Тел.: 376-38-22</td><td></td><td></td></tr>
                        <tr><th>5</th><td colspan="7" class="bold">E-Mail: info@liana.ru</td><td class="end bold">25.08.2015</td><td></td><td></td></tr>
                        <tr class="above"><th>6</th><td></td><td></td><td></td><td></td><td></td><td></td><td></td><td></td><td></td><td></td></tr>
                        <tr class="cap-row"><th>7</th><td colspan="2" class="open"></td><td>Наименование товара</td><td>Артикул</td><td>Ед.изм.</td><td>В наличии</td><td>Цена 1,руб.</td><td class="edge">Цена 2,руб.</td><td></td><td></td></tr>
                        <tr class="cap-row"><th>8</th><td colspan="3" class="start">DVD плееры</td><td></td><td></td><td></td><td></td><td class="edge"></td><td></td><td></td></tr>
                        <tr class="item"><th>9</th><td></td><td></td><td>dvd плеер LG DP547H</td><td>DP547H</td><td>шт</td><td></td><td>4537.00</td><td>3839.00</td><td></td><td></td></tr>
                        <tr class="item"><th>10</th><td></td><td></td><td>dvd плеер Pioneer DV-2240</td><td>DV-2240</td><td>шт</td><td></td><td>2275.00</td><td>1925.00</td><td></td><td></td></tr>
                        <tr class="item"><th>11</th><td></td><td></td><td>dvd плеер Pioneer DV-2242</td><td>DV-2242</td><td>шт</td><td>есть</td><td>2405.00</td><td>2035.00</td><td></td><td></td></tr>
                        <tr class="item"><th>12</th><td></td><td></td><td>dvd плеер Rolsen RDV-2010</td><td>RDV-2010</td><td>шт</td><td></td><td>1690.00</td><td>1430.00</td><td></td><td></td></tr>
                        <tr class="item"><th>13</th><td></td><td></td><td>dvd плеер Rolsen RDV-2020</td><td>RDV-2020</td><td>шт</td><td></td><td>1716.00</td><td>1452.00</td><td></td><td></td></tr>
                        <tr class="item"><th>14</th><td></td><td></td><td>dvd плеер Samsung DVD-E350</td><td>DVD-E350</td><td>шт</td><td>есть</td><td>3445.00</td><td>2915.00</td><td></td><td></td></tr>
                        <tr class="item"><th>15</th><td></td><td></td><td>dvd плеер Samsung DVD-E360K</td><td>DVD-E360K</td><td>шт</td><td></td><td>3705.00</td><td>3135.00</td><td></td><td></td></tr>
                        <tr class="item"><th>16</th><td></td><td></td><td>dvd плеер Sony DVP-SR760HP</td><td>DVP-SR760HP</td><td>шт</td><td>есть</td><td>3874.00</td><td>3278.00</td><td></td><td></td></tr>
                    </tbody>
                </table>
            </div>
            <div class="vscroll">
                <span class="split"></span>
                <button class="sb" aria-label="Вверх"><svg><use href="#i-up" /></svg></button>
                <span class="thumb"></span>
                <span class="track"></span>
                <button class="sb" aria-label="Вниз"><svg><use href="#i-down" /></svg></button>
            </div>
        </div>

        <div class="tabs">
            <button class="nav" aria-label="Первый лист"><svg viewBox="0 0 8 7"><path d="M1 0h1v7H1zM7 0v7L3 3.500z" /></svg></button>
            <button class="nav" aria-label="Предыдущий лист"><svg viewBox="0 0 8 7"><path d="M6 0v7L2 3.500z" /></svg></button>
            <button class="nav" aria-label="Следующий лист"><svg viewBox="0 0 8 7"><path d="M2 0v7l4-3.500z" /></svg></button>
            <button class="nav" aria-label="Последний лист"><svg viewBox="0 0 8 7"><path d="M1 0v7l4-3.500zM6 0h1v7H6z" /></svg></button>
            <button class="tab tab-on"><span>Прайс-лист</span></button>
            <button class="tab"><span>Лист2</span></button>
            <button class="tab"><span>Лист3</span></button>
            <div class="hscroll">
                <span class="split"></span>
                <button class="sb" aria-label="Влево"><svg><use href="#i-left" /></svg></button>
                <span class="thumb"></span>
                <span class="track"></span>
                <button class="sb" aria-label="Вправо"><svg><use href="#i-right" /></svg></button>
                <span class="split"></span>
            </div>
            <svg class="grip"><use href="#i-grip" /></svg>
        </div>

        <footer class="xl-status">
            <span class="ready">Готово</span>
            <span class="cell cell-m"></span>
            <span class="cell cell-l"></span>
            <span class="cell"></span>
            <span class="cell"></span>
            <span class="cell">NUM</span>
            <span class="cell"></span>
            <span class="cell"></span>
            <span class="cell cell-m"></span>
            <svg class="grip"><use href="#i-grip" /></svg>
        </footer>
    </section>

    <svg class="stamp" viewBox="0 0 232 232">
        <g transform="translate(118 118) rotate(-45)">
            <rect x="-124" y="-34" width="248" height="68" rx="11" class="stamp-fill" />
            <rect x="-124" y="-34" width="248" height="68" rx="11" class="stamp-dark" />
            <rect x="-124" y="-34" width="248" height="68" rx="11" class="stamp-light" />
            <text x="0" y="3" class="stamp-name">MONOBIT.RU</text>
            <text x="-2" y="23" class="stamp-sub">- каталог программ и игр -</text>
        </g>
    </svg>
</body>

</html>
```
FILE: styles.css
```css
body {
    margin: 0;
    height: 100vh;
    overflow: hidden;
    position: relative;
    font-family: "DejaVu Sans Condensed", "DejaVu Sans", sans-serif;
    font-size: 11px;
    color: #000;
    background: #d4d0c8;
}

* {
    box-sizing: border-box;
}

h1,
h2,
h3,
p {
    margin: 0;
}

button,
input,
select {
    font: inherit;
    color: inherit;
    border: 0;
    padding: 0;
    margin: 0;
    background: none;
    border-radius: 0;
}

select {
    appearance: none;
    outline: none;
}

.sprite {
    position: absolute;
    width: 0;
    height: 0;
}

/* Window frames */
.frame {
    display: flex;
    flex-direction: column;
    background: #d4d0c8;
    border: 1px solid;
    border-color: #d4d0c8 #404040 #404040 #d4d0c8;
    box-shadow: inset 1px 1px #fff, inset -1px -1px #808080;
    padding: 3px;
}

.titlebar {
    flex: none;
    display: flex;
    align-items: center;
    height: 19px;
    padding: 0 2px;
    background: linear-gradient(90deg, #808080, #c0c0c0);
    color: #d4d0c8;
}

.titlebar-active {
    background: linear-gradient(90deg, #0a246a, #a6caf0);
    color: #fff;
}

.titlebar h1,
.titlebar h2 {
    flex: 1;
    font-size: 11px;
    font-weight: bold;
    margin-left: 3px;
    white-space: nowrap;
}

.title-icon {
    width: 16px;
    height: 16px;
}

.win-btn,
.sb,
.drop,
.thumb,
.split {
    display: flex;
    align-items: center;
    justify-content: center;
    background: #d4d0c8;
    border: 1px solid;
    border-color: #fff #404040 #404040 #fff;
    box-shadow: inset -1px -1px #808080;
}

.win-btn {
    width: 16px;
    height: 15px;
}

.win-btn svg {
    width: 12px;
    height: 10px;
}

.win-off svg {
    fill: #808080;
}

.win-close {
    margin-left: 2px;
}

/* Main window */
.app {
    height: 100%;
}

.menubar {
    flex: none;
    display: flex;
    height: 25px;
    padding: 1px 0 0 2px;
    background: linear-gradient(90deg, #d6d2ca, #f5f5f2);
}

.menubar button,
.xl-menu button {
    padding: 0 8px 0 7px;
}

.toolbar {
    flex: none;
    display: flex;
    align-items: center;
    height: 32px;
    margin-left: 2px;
    padding-left: 2px;
    border-radius: 3px 0 0 3px;
    background: linear-gradient(#f5f5f2, #d6d2c8);
}

.toolbar button {
    width: 34px;
    height: 24px;
}

.toolbar svg {
    width: 24px;
    height: 24px;
}

.sep {
    width: 5px;
    height: 24px;
    background: linear-gradient(90deg, transparent 2px, #a6a6a6 2px 3px, #fff 3px 4px, transparent 4px);
}

.g-123 {
    font: bold 8px "Liberation Sans", sans-serif;
    fill: #a31313;
}

.g-dollar {
    font: bold 11px "Liberation Sans", sans-serif;
    fill: #fff;
}

.g-doc {
    font: 7px "Liberation Mono", monospace;
    fill: #223;
}

.g-cal {
    font: bold 8px "Liberation Sans", sans-serif;
    fill: #e8431c;
}

.mdi {
    flex: 1;
    min-height: 0;
    position: relative;
    margin-top: 1px;
    background: #808080;
    border: 2px solid;
    border-color: #606060 #fff #fff #606060;
}

.statusbar {
    flex: none;
    display: flex;
    align-items: center;
    height: 18px;
    margin-top: 26px;
    padding-left: 1px;
    border-top: 1px solid #808080;
    border-bottom: 1px solid #fff;
}

.status-user {
    padding-left: 1px;
    border-left: 1px solid #808080;
}

.status-date {
    margin-left: auto;
    margin-right: 4px;
}

.grip {
    width: 13px;
    height: 13px;
    flex: none;
    align-self: flex-end;
}

/* Price list dialog */
.dialog {
    position: absolute;
    left: 4px;
    top: 3px;
    width: 368px;
    padding: 2px;
}

.dialog .titlebar {
    margin-top: 1px;
    height: 18px;
}

.price-form {
    font-family: "Liberation Sans", Arial, sans-serif;
    font-size: 11px;
    padding: 9px 9px 4px 4px;
}

.field {
    display: flex;
    align-items: center;
    height: 22px;
    padding-left: 7px;
}

.field-last {
    margin-bottom: 3px;
}

.field > label {
    width: 104px;
    white-space: nowrap;
}

.check {
    display: flex;
    align-items: center;
    white-space: nowrap;
}

.check input {
    appearance: none;
    flex: none;
    width: 13px;
    height: 13px;
    margin-right: 5px;
    background: #fff;
    border: 1px solid;
    border-color: #808080 #fff #fff #808080;
    box-shadow: inset 1px 1px #404040, inset -1px -1px #d4d0c8;
    display: flex;
    align-items: center;
    justify-content: center;
}

.check input:checked::before {
    content: "";
    width: 6px;
    height: 3px;
    border: solid #000;
    border-width: 0 0 2px 2px;
    transform: rotate(-45deg);
    margin-bottom: 2px;
}

.check-wide {
    height: 18px;
    margin: 5px 0 7px;
    padding-left: 8px;
}

.combo {
    flex: 1;
    min-width: 0;
    display: flex;
    height: 21px;
    padding: 1px;
    background: #fff;
    border: 1px solid;
    border-color: #808080 #fff #fff #808080;
    box-shadow: inset 1px 1px #404040, inset -1px -1px #d4d0c8;
}

.combo select,
.combo input {
    flex: 1;
    min-width: 0;
    padding-left: 3px;
}

.drop {
    width: 16px;
    flex: none;
}

.drop svg {
    width: 7px;
    height: 4px;
}

button.drop svg {
    width: 11px;
    height: 10px;
}

.form-buttons {
    display: flex;
    gap: 12px;
}

.btn {
    width: 100px;
    height: 25px;
    background: #d4d0c8;
    border: 1px solid;
    border-color: #fff #404040 #404040 #fff;
    box-shadow: inset -1px -1px #808080;
}

.btn-default {
    border-color: #000;
    box-shadow: inset 1px 1px #fff, inset -1px -1px #404040, inset -2px -2px #808080;
}

.btn-small {
    width: 75px;
    margin-left: auto;
}

/* Print preview */
.preview {
    position: absolute;
    left: 382px;
    right: 3px;
    top: 3px;
    height: 461px;
}

.preview-tools {
    display: flex;
    align-items: center;
    height: 33px;
    margin-top: 1px;
    padding: 2px 0 0 6px;
    border-top: 1px solid #808080;
    box-shadow: inset 0 1px #fff;
    font-family: "Liberation Sans", Arial, sans-serif;
    font-size: 11px;
}

.preview-tools button {
    display: flex;
    align-items: center;
    justify-content: center;
    width: 24px;
}

.preview-tools .tool-zoom {
    width: auto;
    gap: 4px;
    margin-right: 10px;
}

.preview-tools .tool-find {
    margin-left: 8px;
}

.preview-tools svg {
    width: 16px;
    height: 16px;
}

.preview-view {
    flex: 1;
    min-height: 0;
    display: flex;
    border: 2px solid;
    border-color: #606060 #fff #fff #606060;
}

.canvas {
    flex: 1;
    min-width: 0;
    overflow: hidden;
    display: flex;
    justify-content: center;
    padding: 10px 2px 0 0;
    background: #808080;
}

.paper {
    width: 758px;
    height: 600px;
    padding: 37px 34px 37px 35px;
    background: #fff;
    border: 1px solid #000;
    border-right-width: 2px;
    font-family: "Liberation Sans", Arial, sans-serif;
    font-size: 11px;
}

.paper h3 {
    font-size: 16px;
    line-height: 18px;
    text-align: center;
}

.org {
    line-height: 16px;
    text-align: center;
}

.rate {
    display: flex;
    justify-content: space-between;
    line-height: 14px;
    padding: 0 2px 2px;
}

.price-table {
    width: 100%;
    table-layout: fixed;
    border-collapse: collapse;
    line-height: 13px;
}

.price-table th,
.price-table td {
    border: 1px solid #000;
    padding: 0 1px;
    text-align: right;
    height: 16px;
    white-space: nowrap;
}

.price-table th {
    background: #e0e0e0;
    height: 32px;
    text-align: center;
    white-space: normal;
}

.price-table .group td {
    background: #f0f0f0;
    height: 18px;
    text-align: left;
    font-size: 14px;
    font-weight: bold;
}

.price-table td:nth-child(2) {
    text-align: left;
}

.price-table td:nth-child(3),
.price-table td:nth-child(4) {
    text-align: center;
}

.w-code {
    width: 53px;
}

.w-unit {
    width: 46px;
}

.w-price {
    width: 65px;
}

/* Scrollbars */
.vscroll {
    display: flex;
    flex-direction: column;
    width: 16px;
    flex: none;
}

.hscroll {
    display: flex;
    height: 17px;
}

.track {
    flex: 1;
    background: repeating-conic-gradient(#fff 0 25%, #d4d0c8 0 50%) 0 0 / 2px 2px;
}

.sb {
    width: 16px;
    height: 16px;
    flex: none;
}

.sb svg {
    width: 7px;
    height: 9px;
}

.sb-off svg {
    fill: #808080;
}

.preview .hscroll {
    flex: none;
    margin: 1px 16px 0 0;
}

/* Excel window */
.excel {
    position: absolute;
    left: 10px;
    top: 381px;
    bottom: 1px;
    width: 1038px;
}

.xl-menu {
    flex: none;
    display: flex;
    align-items: center;
    height: 26px;
    padding: 0 1px 0 4px;
    background: linear-gradient(90deg, #d6d2ca, #f5f4f2 60%);
}

.dots {
    width: 3px;
    height: 17px;
    flex: none;
    background: repeating-linear-gradient(#999 0 2px, transparent 2px 4px);
}

.xl-book {
    width: 18px;
    height: 18px;
    margin: 0 1px 0 2px;
}

.ask {
    display: flex;
    align-items: center;
    width: 149px;
    height: 18px;
    margin-left: auto;
    background: #fff;
}

.ask input {
    flex: 1;
    min-width: 0;
    padding-left: 2px;
}

.ask input::placeholder {
    color: #808080;
    opacity: 1;
}

.ask svg {
    width: 12px;
    height: 3px;
}

.xl-menu .doc-btn {
    width: 17px;
    padding: 0;
}

.doc-btn svg {
    width: 12px;
    height: 10px;
}

.xl-tools {
    flex: none;
    display: flex;
    gap: 2px;
    height: 25px;
    padding-left: 2px;
}

.xl-bar {
    display: flex;
    align-items: center;
    width: 382px;
    padding-left: 3px;
    border-radius: 3px;
    background: linear-gradient(#f5f5f2, #d6d2c8);
}

.xl-bar-wide {
    flex: 1;
    width: auto;
}

.xl-bar button {
    width: 23px;
    height: 23px;
    display: flex;
    align-items: center;
    justify-content: center;
}

.xl-bar button svg {
    width: 16px;
    height: 16px;
}

.arr {
    width: 10px;
    height: 3px;
    flex: none;
}

.xsep {
    width: 7px;
    height: 14px;
    background: linear-gradient(90deg, transparent 2px, #a6a6a6 2px 3px, #fff 3px 4px, transparent 4px);
}

.xl-bar-wide .xsep {
    width: 6px;
}

.xl-combo {
    display: flex;
    height: 18px;
    padding: 1px;
    background: #fff;
}

.xl-combo select {
    flex: 1;
    min-width: 0;
    padding-left: 2px;
}

.xl-combo span {
    display: flex;
    align-items: center;
    justify-content: center;
    width: 11px;
    background: #eae8e4;
}

.xl-combo svg {
    width: 5px;
    height: 3px;
}

.w-zoom {
    width: 57px;
}

.w-font {
    width: 127px;
    margin: 0 3px;
}

.w-size {
    width: 38px;
}

.xl-bar .fmt {
    font: 15px "Liberation Serif", serif;
}

.fmt i,
.fmt u {
    font-weight: bold;
}

.xl-bar .num {
    font-family: "Liberation Sans", Arial, sans-serif;
}

.cap {
    width: 12px;
    align-self: stretch;
    margin-left: auto;
    border-radius: 0 3px 3px 0;
    background: linear-gradient(#a0a0a0, #707070);
    display: flex;
    align-items: center;
    justify-content: center;
}

.cap svg {
    width: 8px;
    height: 20px;
}

.g-help {
    font: bold 11px "Liberation Sans", sans-serif;
    fill: #fff;
}

.g-a {
    font: bold 9px "Liberation Sans", sans-serif;
}

.g-dec {
    font: bold 8px "Liberation Sans", sans-serif;
    fill: #333;
}

.g-color {
    font: bold 14px "Liberation Serif", serif;
    fill: #2f5597;
}

.formula {
    flex: none;
    display: flex;
    align-items: center;
    height: 18px;
    padding: 0 1px 0 2px;
    font-family: "Liberation Sans", Arial, sans-serif;
    font-size: 13px;
}

.namebox {
    width: 92px;
    height: 17px;
    text-align: center;
    background: #fff;
    margin-right: 3px;
}

.fx {
    width: 61px;
    padding-right: 3px;
    font: italic bold 14px "Liberation Serif", serif;
    text-align: right;
}

.formula-input {
    flex: 1;
    height: 18px;
    background: #fff;
}

.sheet {
    flex: 1;
    min-height: 0;
    display: flex;
    padding-right: 1px;
    border-top: 1px solid #404040;
    border-left: 2px solid #606060;
}

.grid-clip {
    flex: 1;
    min-width: 0;
    overflow: hidden;
    background: #fff;
}

.grid {
    width: 1041px;
    table-layout: fixed;
    border-collapse: separate;
    border-spacing: 0;
    font-family: "DejaVu Sans", Verdana, sans-serif;
    font-size: 13px;
    line-height: 15px;
}

.c-num {
    width: 26px;
}

.c-a {
    width: 19px;
}

.c-c {
    width: 390px;
}

.c-d {
    width: 89px;
}

.c-e {
    width: 61px;
}

.c-f {
    width: 103px;
}

.c-i {
    width: 64px;
}

.grid th,
.grid td {
    height: 17px;
    padding: 1px 2px 0;
    border: solid #c0c0c0;
    border-width: 0 1px 1px 0;
    overflow: hidden;
    white-space: nowrap;
}

.grid th {
    background: #d4d0c8;
    border-color: #808080;
    font-family: "Liberation Sans", Arial, sans-serif;
    font-size: 14px;
    font-weight: normal;
    padding: 0;
}

.grid .picked {
    background: #b6bdd2;
    border-color: #0a246a;
}

.grid .tall th,
.grid .tall td {
    height: 20px;
}

.grid .sheet-title {
    text-align: center;
    font-size: 16px;
    font-weight: bold;
}

.grid .bold {
    font-weight: bold;
    padding: 1px 3px 0;
}

.grid .mid {
    text-align: center;
}

.grid .end {
    text-align: right;
}

.above td:nth-child(-n+9),
.cap-row td,
.item td {
    border-bottom: 1px dotted #000;
}

.cap-row td {
    background: #c0c0c0;
    border-right: 1px dotted #000;
    text-align: center;
    font-weight: bold;
}

.grid .cap-row td {
    padding: 1px 0 0;
}

.grid .cap-row .open {
    border-right: 0;
}

.grid .cap-row .start {
    text-align: left;
    padding-left: 3px;
}

.item td:nth-child(n+4) {
    border-right: 1px dotted #000;
}

.item td:nth-child(6) {
    text-align: center;
}

.item td:nth-child(n+7) {
    text-align: right;
}

.grid .cap-row .edge,
.grid .item td:nth-child(9) {
    border-right: 1px solid #000;
}

/* Empty columns past the list */
.grid .edge ~ td,
.grid .item td:nth-child(n+10) {
    background: #fff;
    border-right: 1px solid #c0c0c0;
    border-bottom: 1px solid #c0c0c0;
}

.vscroll .split {
    height: 6px;
    flex: none;
}

.sheet .thumb {
    flex: none;
    height: 169px;
}

.tabs {
    flex: none;
    display: flex;
    height: 16px;
    padding-left: 2px;
    border-top: 1px solid #808080;
}

.nav {
    width: 15px;
    height: 15px;
}

.nav svg {
    width: 8px;
    height: 7px;
}

.tab {
    position: relative;
    height: 14px;
    padding: 0 12px 0 3px;
}

.tab span {
    position: relative;
    z-index: 2;
}

.tab::before,
.tab::after {
    content: "";
    position: absolute;
    z-index: 1;
    top: 0;
    bottom: 0;
    background: #d4d0c8;
    border-bottom: 1px solid #000;
}

.tab::before {
    left: -2px;
    right: 50%;
    border-left: 1px solid #000;
    transform: skewX(25deg);
}

.tab::after {
    left: 40%;
    right: 5px;
    border-right: 1px solid #000;
    transform: skewX(-25deg);
}

.tab-on {
    z-index: 3;
    font-weight: bold;
    padding: 0 9px;
}

.tab-on::before {
    left: 4px;
}

.tab-on::before,
.tab-on::after {
    background: #fff;
}

.tabs .hscroll {
    width: 403px;
    height: 15px;
    margin-left: auto;
}

.tabs .sb {
    height: 15px;
}

.tabs .split {
    width: 5px;
}

.tabs .thumb {
    width: 281px;
}

.tabs .grip {
    margin: 0 1px 0 3px;
}

.xl-status {
    flex: none;
    display: flex;
    align-items: center;
    gap: 2px;
    height: 20px;
    padding: 2px 1px 0 5px;
    border-top: 1px solid #fff;
}

.ready {
    flex: 1;
}

.cell {
    width: 27px;
    height: 15px;
    text-align: center;
    border: 1px solid #e2dfd8;
}

.cell-m {
    width: 33px;
}

.cell-l {
    width: 111px;
}

/* Stamp in the corner */
.stamp {
    position: absolute;
    right: 0;
    bottom: 0;
    width: 232px;
    height: 232px;
    pointer-events: none;
}

.stamp-fill {
    fill: #fff;
    fill-opacity: .06;
}

.stamp-dark {
    fill: none;
    stroke: #555;
    stroke-opacity: .7;
    stroke-width: 6px;
}

.stamp-light {
    fill: none;
    stroke: #ccc;
    stroke-width: 4px;
}

.stamp-name,
.stamp-sub {
    font-family: "DejaVu Sans Condensed", "DejaVu Sans", sans-serif;
    text-anchor: middle;
    fill: #d0d0d0;
}

.stamp-name {
    font-size: 37px;
    stroke: #d0d0d0;
    stroke-width: 1px;
    filter: drop-shadow(0 0 1px #222) drop-shadow(0 0 1px #444);
}

.stamp-sub {
    font-size: 16px;
    stroke: #555;
    stroke-width: 2px;
    paint-order: stroke;
}
```
